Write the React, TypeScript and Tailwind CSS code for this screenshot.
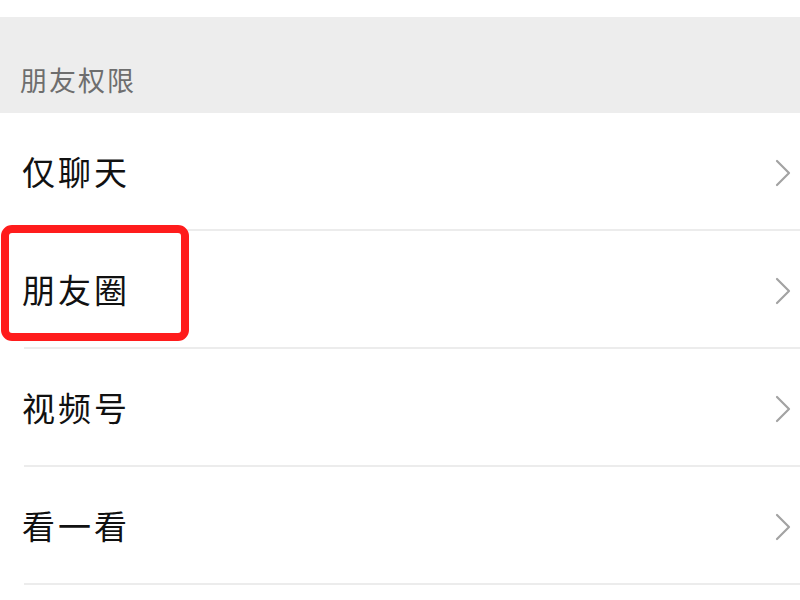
import React from "react";

const font = { fontFamily: '"Noto Sans CJK SC", "Noto Sans", sans-serif' };

function Chevron() {
  return (
    <svg width="18" height="28" viewBox="0 0 18 28" className="shrink-0">
      <path d="M3 2 L15 14 L3 26" fill="none" stroke="#a3a3a3" strokeWidth="2.2" strokeLinecap="round" strokeLinejoin="round" />
    </svg>
  );
}

function Row({ label, highlight }: { label: string; highlight?: boolean }) {
  return (
    <div className="relative h-[118px] flex items-center bg-white">
      <div className="flex-1 pl-[22px] text-[33px] tracking-[3px] text-[#111]" style={font}>
        {label}
      </div>
      <div className="pr-[8px] pt-[2px]">
        <Chevron />
      </div>
      <div className="absolute bottom-0 right-0 left-[24px] h-[2px] bg-[#ececec]" />
      {highlight && (
        <div className="absolute left-[1px] top-[-6px] w-[188px] h-[116px] border-[8px] border-[#ff1c1c] rounded-[11px]" />
      )}
    </div>
  );
}

export default function App() {
  return (
    <div className="w-[800px] h-[600px] bg-white overflow-hidden">
      <div className="h-[17px] bg-white" />
      <div className="h-[96px] bg-[#ededed] flex items-end pb-[13px] pl-[20px]">
        <span className="text-[27px] tracking-[2px] text-[#6e6e6e]" style={font}>朋友权限</span>
      </div>
      <Row label="仅聊天" />
      <Row label="朋友圈" highlight />
      <Row label="视频号" />
      <Row label="看一看" />
    </div>
  );
}
